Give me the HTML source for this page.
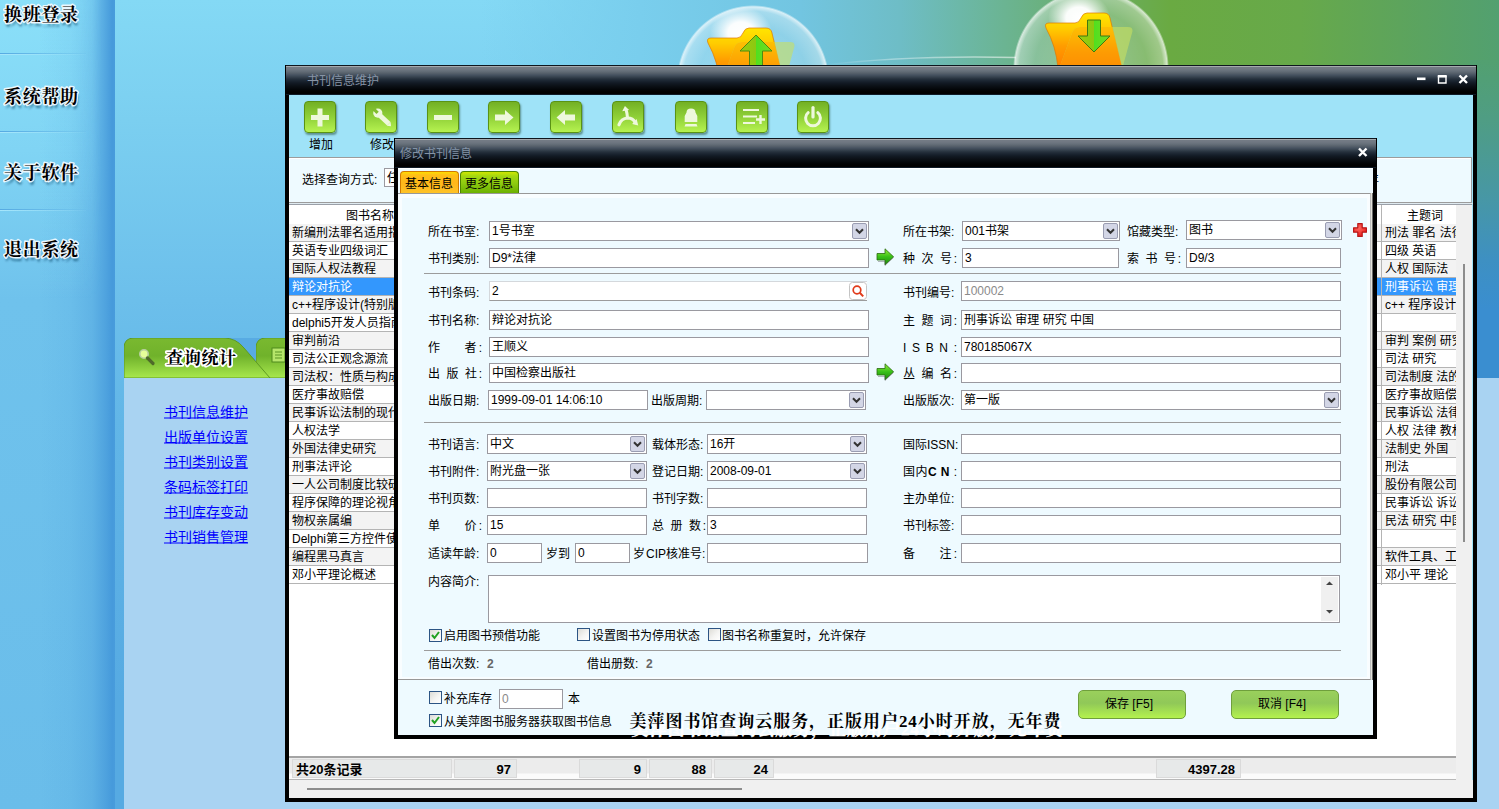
<!DOCTYPE html><html lang="zh-CN"><head><meta charset="utf-8"><title>书刊信息维护</title><style>
*{box-sizing:border-box;margin:0;padding:0}
html,body{width:1499px;height:809px;overflow:hidden}
body{position:relative;font-family:"Liberation Sans","Noto Sans CJK SC",sans-serif;font-size:12px;line-height:14px;color:#000;background:#6abdea}
.a{position:absolute}
.inp{position:absolute;background:#fff;border:1px solid #9a99a0;height:20px}
.cb{position:absolute;right:1px;top:1px;width:15px;height:16px;background:#d3d6e6;border:1px solid #9a9db2;border-radius:2px}
.cb svg{position:absolute;left:2px;top:4px}
.sep{position:absolute;height:1px;background:#9c9c9c}
.chk{position:absolute;width:13px;height:13px;background:linear-gradient(135deg,#dddcd6,#f4f4f2 55%,#fff);border:1px solid #2c5484}
.tb{position:absolute;top:101px;width:32px;height:32px;border-radius:4px;border:1px solid #5a9314;background:linear-gradient(#73b024,#8fd038 50%,#b6f250);box-shadow:1px 2px 2px rgba(40,80,60,.55)}
.tb svg{position:absolute;left:0;top:0}
.row{position:absolute;left:0;height:18px;border-bottom:1px solid #b4b4b4;white-space:nowrap;overflow:hidden;line-height:19px;padding-left:2px}
.btn{position:absolute;top:690px;width:108px;height:29px;border:1px solid #6f9f3c;border-radius:5px;background:linear-gradient(#9ad05c,#90c858 45%,#b4f24e);text-align:center;line-height:27px;font-size:12px}
.cell{position:absolute;top:1px;height:19px;background:#e7e9e9;border:1px solid #dadada;font-weight:bold;font-size:13px;line-height:18px;text-align:right;padding-right:4px;white-space:nowrap;overflow:hidden}
svg[role=img]{overflow:visible}
svg text{font-family:"Liberation Sans","Noto Sans CJK SC",sans-serif;white-space:pre}
.br text{font-family:"Liberation Serif","Noto Serif CJK SC",serif;font-size:18px;font-weight:bold;letter-spacing:.7px}
.br2 text{font-family:"Liberation Serif","Noto Serif CJK SC",serif;font-size:17px;font-weight:bold;letter-spacing:.7px}
.br3 text{font-family:"Liberation Serif","Noto Serif CJK SC",serif;font-size:17px;font-weight:bold}
</style></head><body>
<div class="a" style="left:0;top:0;width:1499px;height:809px;background:linear-gradient(180deg,#84d9f5 0px,#7bcff0 120px,#6cbfeb 300px,#62b6e7 420px,#56aae2 700px,#56aae2 809px)"></div>
<div class="a" style="left:480px;top:0;width:1019px;height:66px;background:linear-gradient(90deg,rgba(124,208,240,0) 0px,#79ceed 160px,#72c5e1 320px,#6ebdc6 420px,#6cb8a8 480px,#6ab07c 570px,#6aaa42 690px,#67a94a 820px,#5da45c 920px,#52a070 1019px)"></div>
<div class="a" style="left:1470px;top:60px;width:29px;height:318px;background:linear-gradient(180deg,#52a070 0,#4f9d84 60px,#4797a6 140px,#3e90c2 200px,#3a8ed0 250px,#3a8ed0 318px)"></div>
<div class="a" style="left:0;top:0;width:115px;height:809px;background:linear-gradient(180deg,#8be0f9 0,#80d4f4 150px,#6fc2ec 300px,#6abdea 809px)"></div>
<div class="a" style="left:40px;top:0;width:75px;height:809px;background:linear-gradient(90deg,rgba(74,158,220,0) 0,rgba(74,158,220,.12) 30px,rgba(74,158,220,.4) 52px,rgba(73,157,220,.85) 66px,rgba(70,154,219,1) 72px,rgba(72,156,220,1) 75px)"></div>
<div class="a" style="left:40px;top:0;width:75px;height:300px;background:linear-gradient(180deg,rgba(134,220,248,.3),rgba(134,220,248,0));-webkit-mask-image:linear-gradient(90deg,#000 0,#000 40px,transparent 62px);mask-image:linear-gradient(90deg,#000 0,#000 40px,transparent 62px)"></div>
<div class="a" style="left:226px;top:338px;width:64px;height:40px;background:#58abe3"></div>
<div class="a" style="left:0;top:53px;width:86px;height:1px;background:linear-gradient(90deg,#56aae2,rgba(90,174,226,.1))"></div>
<div class="a" style="left:0;top:54px;width:86px;height:1px;background:linear-gradient(90deg,#a6e6fb,rgba(166,230,251,.05))"></div>
<div class="a" style="left:0;top:131px;width:86px;height:1px;background:linear-gradient(90deg,#56aae2,rgba(90,174,226,.1))"></div>
<div class="a" style="left:0;top:132px;width:86px;height:1px;background:linear-gradient(90deg,#a6e6fb,rgba(166,230,251,.05))"></div>
<div class="a" style="left:0;top:209px;width:86px;height:1px;background:linear-gradient(90deg,#56aae2,rgba(90,174,226,.1))"></div>
<div class="a" style="left:0;top:210px;width:86px;height:1px;background:linear-gradient(90deg,#a6e6fb,rgba(166,230,251,.05))"></div>
<svg class="a" width="0" height="0"><defs><filter id="fsh" x="-10%" y="-30%" width="120%" height="180%"><feGaussianBlur stdDeviation="1.300"/></filter><filter id="fgl" x="-10%" y="-30%" width="120%" height="160%"><feGaussianBlur stdDeviation=".700"/></filter></defs></svg>
<svg class="a" style="left:0px;top:0px" width="100" height="32" viewBox="0 0 100 32" role="img" aria-label="换班登录"><g class="br"><text x="4" y="21" transform="translate(1,4)" fill="#0a3a5c" fill-opacity=".6" filter="url(#fsh)">换班登录</text><text x="4" y="21" fill="#fff" stroke="#fff" stroke-width="3" stroke-linejoin="round" stroke-opacity=".8" filter="url(#fgl)">换班登录</text><text x="4" y="21" fill="#fff" stroke="#eef8ff" stroke-width="1.400" stroke-linejoin="round">换班登录</text><text x="4" y="21" fill="#000">换班登录</text></g></svg>
<svg class="a" style="left:0px;top:82px" width="100" height="32" viewBox="0 0 100 32" role="img" aria-label="系统帮助"><g class="br"><text x="4" y="21" transform="translate(1,4)" fill="#0a3a5c" fill-opacity=".6" filter="url(#fsh)">系统帮助</text><text x="4" y="21" fill="#fff" stroke="#fff" stroke-width="3" stroke-linejoin="round" stroke-opacity=".8" filter="url(#fgl)">系统帮助</text><text x="4" y="21" fill="#fff" stroke="#eef8ff" stroke-width="1.400" stroke-linejoin="round">系统帮助</text><text x="4" y="21" fill="#000">系统帮助</text></g></svg>
<svg class="a" style="left:0px;top:158px" width="100" height="32" viewBox="0 0 100 32" role="img" aria-label="关于软件"><g class="br"><text x="4" y="21" transform="translate(1,4)" fill="#0a3a5c" fill-opacity=".6" filter="url(#fsh)">关于软件</text><text x="4" y="21" fill="#fff" stroke="#fff" stroke-width="3" stroke-linejoin="round" stroke-opacity=".8" filter="url(#fgl)">关于软件</text><text x="4" y="21" fill="#fff" stroke="#eef8ff" stroke-width="1.400" stroke-linejoin="round">关于软件</text><text x="4" y="21" fill="#000">关于软件</text></g></svg>
<svg class="a" style="left:0px;top:235px" width="100" height="32" viewBox="0 0 100 32" role="img" aria-label="退出系统"><g class="br"><text x="4" y="21" transform="translate(1,4)" fill="#0a3a5c" fill-opacity=".6" filter="url(#fsh)">退出系统</text><text x="4" y="21" fill="#fff" stroke="#fff" stroke-width="3" stroke-linejoin="round" stroke-opacity=".8" filter="url(#fgl)">退出系统</text><text x="4" y="21" fill="#fff" stroke="#eef8ff" stroke-width="1.400" stroke-linejoin="round">退出系统</text><text x="4" y="21" fill="#000">退出系统</text></g></svg>
<div class="a" style="left:124px;top:378px;width:1375px;height:431px;background:#a9d3f2"></div>
<svg class="a" style="left:256px;top:338px" width="150" height="40" viewBox="0 0 150 40"><defs><linearGradient id="tg256" x1="0" y1="0" x2="0" y2="1"><stop offset="0" stop-color="#7ab930"/><stop offset=".45" stop-color="#70b22b"/><stop offset="1" stop-color="#a8e84e"/></linearGradient></defs><path d="M0 40V10Q0 0 10 0H100Q112 0 120 10L146 40Z" fill="url(#tg256)" stroke="#5e9a22" stroke-width="1"/><rect x="16" y="10" width="13" height="14" fill="#b6e66a" stroke="#4f8a1c"/><path d="M19 14h7M19 17h7M19 20h7" stroke="#5a9424" stroke-width="1"/></svg>
<svg class="a" style="left:124px;top:338px" width="150" height="40" viewBox="0 0 150 40"><defs><linearGradient id="tg124" x1="0" y1="0" x2="0" y2="1"><stop offset="0" stop-color="#7ab930"/><stop offset=".45" stop-color="#70b22b"/><stop offset="1" stop-color="#a8e84e"/></linearGradient></defs><path d="M0 40V10Q0 0 10 0H100Q112 0 120 10L146 40Z" fill="url(#tg124)" stroke="#5e9a22" stroke-width="1"/><circle cx="20" cy="16" r="4.200" fill="#e6ff9a" stroke="#b8cfa0" stroke-width="1.600"/><path d="M23.500 20L29 25.500" stroke="#4f6a2a" stroke-width="3.200" stroke-linecap="round"/></svg>
<svg class="a" style="left:160px;top:344px" width="84" height="28" viewBox="0 0 84 28" role="img" aria-label="查询统计"><g class="br2"><text x="6" y="20" fill="#fff" stroke="#fff" stroke-width="3.600" stroke-linejoin="round" filter="url(#fgl)">查询统计</text><text x="6" y="20" fill="#fff" stroke="#fff" stroke-width="2" stroke-linejoin="round">查询统计</text><text x="6" y="20" fill="#000">查询统计</text></g></svg>
<svg class="a" style="left:164px;top:402.5px;" width="86" height="18" role="img" aria-label="书刊信息维护"><text x="0" y="13.5" font-size="14" fill="#0000ff">书刊信息维护</text><path d="M0 15H84" stroke="#0000ff" stroke-width="1" fill="none"/></svg>
<svg class="a" style="left:164px;top:428px;" width="86" height="18" role="img" aria-label="出版单位设置"><text x="0" y="13.5" font-size="14" fill="#0000ff">出版单位设置</text><path d="M0 15H84" stroke="#0000ff" stroke-width="1" fill="none"/></svg>
<svg class="a" style="left:164px;top:453px;" width="86" height="18" role="img" aria-label="书刊类别设置"><text x="0" y="13.5" font-size="14" fill="#0000ff">书刊类别设置</text><path d="M0 15H84" stroke="#0000ff" stroke-width="1" fill="none"/></svg>
<svg class="a" style="left:164px;top:478px;" width="86" height="18" role="img" aria-label="条码标签打印"><text x="0" y="13.5" font-size="14" fill="#0000ff">条码标签打印</text><path d="M0 15H84" stroke="#0000ff" stroke-width="1" fill="none"/></svg>
<svg class="a" style="left:164px;top:503px;" width="86" height="18" role="img" aria-label="书刊库存变动"><text x="0" y="13.5" font-size="14" fill="#0000ff">书刊库存变动</text><path d="M0 15H84" stroke="#0000ff" stroke-width="1" fill="none"/></svg>
<svg class="a" style="left:164px;top:528px;" width="86" height="18" role="img" aria-label="书刊销售管理"><text x="0" y="13.5" font-size="14" fill="#0000ff">书刊销售管理</text><path d="M0 15H84" stroke="#0000ff" stroke-width="1" fill="none"/></svg>
<svg class="a" style="left:672px;top:0" width="162" height="66" viewBox="672 0 162 66"><defs><radialGradient id="og753" cx="50%" cy="50%" r="50%"><stop offset="0" stop-color="#fff" stop-opacity=".3"/><stop offset=".72" stop-color="#fff" stop-opacity=".2"/><stop offset=".92" stop-color="#fff" stop-opacity=".36"/><stop offset=".975" stop-color="#fff" stop-opacity=".72"/><stop offset="1" stop-color="#fff" stop-opacity="0"/></radialGradient><radialGradient id="oh753" cx="50%" cy="50%" r="50%"><stop offset="0" stop-color="#fff" stop-opacity="1"/><stop offset=".42" stop-color="#fff" stop-opacity=".96"/><stop offset="1" stop-color="#fff" stop-opacity="0"/></radialGradient><linearGradient id="of753" x1="0" y1="0" x2="0" y2="1"><stop offset="0" stop-color="#ffe600"/><stop offset=".28" stop-color="#ffcc00"/><stop offset=".6" stop-color="#ff9c00"/><stop offset="1" stop-color="#ff7e00"/></linearGradient><linearGradient id="ofl753" x1="0" y1="0" x2="0" y2="1"><stop offset="0" stop-color="#ffbe00"/><stop offset=".5" stop-color="#ff9a00"/><stop offset="1" stop-color="#ff8400"/></linearGradient><linearGradient id="oa753" x1="0" y1="0" x2="1" y2="0"><stop offset="0" stop-color="#9ccc10"/><stop offset=".5" stop-color="#8cc810"/><stop offset=".5" stop-color="#4fe020"/><stop offset="1" stop-color="#7ad820"/></linearGradient><clipPath id="ocp753"><path d="M708 43 q-2 -5 3 -5 h26 q4 0 6 -5 q2 -5 6 -5 h17 q5 0 6 5 l12 50 h-64 q-2 -22 -12 -40z"/></clipPath></defs><circle cx="753" cy="81.5" r="76.5" fill="url(#og753)"/><ellipse cx="741" cy="33" rx="31" ry="26" fill="url(#oh753)"/><path d="M708 43 q-2 -5 3 -5 h26 q4 0 6 -5 q2 -5 6 -5 h17 q5 0 6 5 l12 50 h-64 q-2 -22 -12 -40z" fill="url(#of753)" stroke="#e07800" stroke-width=".7"/><path d="M734 48 q2 -6 8 -6 h48 q6 0 4 6 l-12 44 h-64z" fill="#c8e060" fill-opacity=".6"/><path d="M734 48 q2 -6 8 -6 h48 q6 0 4 6 l-12 44 h-64z" fill="url(#ofl753)" fill-opacity=".95" clip-path="url(#ocp753)"/><path d="M756 35 l16 16 h-9.500 v20 h-13 v-20 h-9.500z" fill="url(#oa753)" stroke="#4f8a10" stroke-width="1"/></svg>
<svg class="a" style="left:1008px;top:0" width="166" height="66" viewBox="1008 0 166 66"><defs><radialGradient id="og1091" cx="50%" cy="50%" r="50%"><stop offset="0" stop-color="#fff" stop-opacity=".3"/><stop offset=".72" stop-color="#fff" stop-opacity=".2"/><stop offset=".92" stop-color="#fff" stop-opacity=".36"/><stop offset=".975" stop-color="#fff" stop-opacity=".72"/><stop offset="1" stop-color="#fff" stop-opacity="0"/></radialGradient><radialGradient id="oh1091" cx="50%" cy="50%" r="50%"><stop offset="0" stop-color="#fff" stop-opacity="1"/><stop offset=".42" stop-color="#fff" stop-opacity=".96"/><stop offset="1" stop-color="#fff" stop-opacity="0"/></radialGradient><linearGradient id="of1091" x1="0" y1="0" x2="0" y2="1"><stop offset="0" stop-color="#ffe600"/><stop offset=".28" stop-color="#ffcc00"/><stop offset=".6" stop-color="#ff9c00"/><stop offset="1" stop-color="#ff7e00"/></linearGradient><linearGradient id="ofl1091" x1="0" y1="0" x2="0" y2="1"><stop offset="0" stop-color="#ffbe00"/><stop offset=".5" stop-color="#ff9a00"/><stop offset="1" stop-color="#ff8400"/></linearGradient><linearGradient id="oa1091" x1="0" y1="0" x2="1" y2="0"><stop offset="0" stop-color="#9ccc10"/><stop offset=".5" stop-color="#8cc810"/><stop offset=".5" stop-color="#4fe020"/><stop offset="1" stop-color="#7ad820"/></linearGradient><clipPath id="ocp1091"><path d="M1046 28 q-2 -5 3 -5 h26 q4 0 6 -5 q2 -5 6 -5 h17 q5 0 6 5 l12 50 h-64 q-2 -22 -12 -40z"/></clipPath></defs><circle cx="1091" cy="67.5" r="78" fill="url(#og1091)"/><ellipse cx="1079" cy="18" rx="31" ry="26" fill="url(#oh1091)"/><path d="M1046 28 q-2 -5 3 -5 h26 q4 0 6 -5 q2 -5 6 -5 h17 q5 0 6 5 l12 50 h-64 q-2 -22 -12 -40z" fill="url(#of1091)" stroke="#e07800" stroke-width=".7"/><path d="M1072 33 q2 -6 8 -6 h48 q6 0 4 6 l-12 44 h-64z" fill="#c8e060" fill-opacity=".6"/><path d="M1072 33 q2 -6 8 -6 h48 q6 0 4 6 l-12 44 h-64z" fill="url(#ofl1091)" fill-opacity=".95" clip-path="url(#ocp1091)"/><path d="M1087.5 20 h13 v16 h9.500 l-16 16 l-16 -16 h9.500z" fill="url(#oa1091)" stroke="#3f7a10" stroke-width="1"/></svg>
<svg class="a" style="left:820px;top:50px" width="200" height="16" viewBox="0 0 200 16"><defs><linearGradient id="sw" x1="0" y1="0" x2="1" y2="0"><stop offset="0" stop-color="#fff" stop-opacity="0"/><stop offset=".35" stop-color="#fff" stop-opacity=".35"/><stop offset="1" stop-color="#fff" stop-opacity=".55"/></linearGradient></defs><path d="M4 15Q90 5 196 7.500" fill="none" stroke="url(#sw)" stroke-width="1.300"/></svg>
<div class="a" style="left:285px;top:65px;width:1192px;height:737px;background:#000"></div>
<div class="a" style="left:286px;top:65px;width:1190px;height:30px;background:linear-gradient(180deg,#0e161e 0px,#0e161e 1px,#a6aaae 1px,#a6aaae 2px,#747c85 2px,#707882 4px,#66707a 6px,#58626c 8px,#465260 10px,#36424e 12px,#25303c 14px,#1a2430 16px,#121a24 18px,#0b1016 21px,#020406 25px,#000 27px,#000 29px,#0e1a26 29px,#0e1a26 30px)"></div>
<svg class="a" style="left:307px;top:73px;" width="74" height="14" role="img" aria-label="书刊信息维护"><text x="0" y="11.5" font-size="12" fill="#8794a6">书刊信息维护</text></svg>
<svg class="a" style="left:1414px;top:72px" width="58" height="14" viewBox="0 0 58 14"><rect x="3" y="5.500" width="8.500" height="2.600" fill="#fff"/><path d="M24.500 4.500h7.500v6.500h-7.500z" fill="none" stroke="#fff" stroke-width="1.400"/><rect x="23.800" y="3" width="8.900" height="2.400" fill="#fff"/><path d="M45.500 3.500l7.500 7.500M53 3.500l-7.500 7.500" stroke="#fff" stroke-width="2.400"/></svg>
<div class="a" style="left:289px;top:95px;width:1184px;height:703px;background:#9fe3f8"></div>
<div class="tb" style="left:304px"><svg width="30" height="30" viewBox="1 1.500 30 30"><path d="M13.500 8h5v6.500H25v5h-6.500V26h-5v-6.500H7v-5h6.500z" fill="#eef8dc"/></svg></div>
<div class="tb" style="left:365px"><svg width="30" height="30" viewBox="1 1.500 30 30"><path d="M14.200 14.200L23.800 23.200" stroke="#eef8dc" stroke-width="5" stroke-linecap="butt"/><path d="M21.800 25.300l4.200 .400l-.400 -4.200z" fill="#eef8dc"/><circle cx="12.800" cy="12.600" r="4.600" fill="#eef8dc"/><path d="M12.600 12.400L8 7.800" stroke="#80bd2e" stroke-width="3.200"/></svg></div>
<div class="tb" style="left:427px"><svg width="30" height="30" viewBox="1 1.500 30 30"><rect x="7" y="14.500" width="18" height="5" fill="#eef8dc"/></svg></div>
<div class="tb" style="left:488px"><svg width="30" height="30" viewBox="1 1.500 30 30"><path d="M7 14h10V9.500l8.500 7.500L17 24.500V20H7z" fill="#eef8dc"/></svg></div>
<div class="tb" style="left:550px"><svg width="30" height="30" viewBox="1 1.500 30 30"><path d="M25 14H15V9.500L6.500 17L15 24.500V20h10z" fill="#eef8dc"/></svg></div>
<div class="tb" style="left:612px"><svg width="30" height="30" viewBox="1 1.500 30 30"><g transform="translate(1.600,.400) scale(.900)"><path d="M15.500 19.500Q15 13 13.800 9.500" stroke="#eef8dc" stroke-width="3.400" fill="none"/><path d="M9.600 11.600l3 -6l4.600 4.400z" fill="#eef8dc"/><path d="M6 26.500Q8.500 19.500 15.500 19Q21.500 19 24 24" stroke="#eef8dc" stroke-width="3.600" fill="none" stroke-linecap="round"/><path d="M20.600 25.600l6.800 1.600l-1.800 -7.200z" fill="#eef8dc"/></g></svg></div>
<div class="tb" style="left:675px"><svg width="30" height="30" viewBox="1 1.500 30 30"><path d="M11.500 12q0-4 4.500-4t4.500 4l1.800 3.500v6h-12.600v-6zM10.500 23.500h11l1 2.500h-13z" fill="#eef8dc"/></svg></div>
<div class="tb" style="left:736px"><svg width="30" height="30" viewBox="1 1.500 30 30"><path d="M7 9.500h16M7 16h14M7 22.500h12" stroke="#eef8dc" stroke-width="2.200"/><path d="M24.500 14.500v9M20 19h9" stroke="#eef8dc" stroke-width="2.400"/></svg></div>
<div class="tb" style="left:797px"><svg width="30" height="30" viewBox="1 1.500 30 30"><path d="M11.200 12.200a7.400 7.400 0 1 0 9.600 0" fill="none" stroke="#eef8dc" stroke-width="3" stroke-linecap="round"/><path d="M16 7v9.500" stroke="#eef8dc" stroke-width="3.200" stroke-linecap="round"/></svg></div>
<svg class="a" style="left:309px;top:137px;" width="26" height="14" role="img" aria-label="增加"><text x="0" y="11.5" font-size="12">增加</text></svg>
<svg class="a" style="left:370px;top:137px;" width="26" height="14" role="img" aria-label="修改"><text x="0" y="11.5" font-size="12">修改</text></svg>
<div class="a" style="left:289px;top:157px;width:1183px;height:46px;background:#eefaff;border:1px solid #9c9c9c;border-left:none;box-shadow:inset 1px 1px 0 #fff"></div>
<div class="a" style="left:289px;top:203px;width:1184px;height:1px;background:#dfeaf0"></div>
<svg class="a" style="left:302px;top:172px;" width="80" height="14" role="img" aria-label="选择查询方式:"><text x="0" y="11.5" font-size="12">选择查询方式:</text></svg>
<div class="inp" style="left:384px;top:168px;width:120px;height:19px"><svg class="a" style="left:2px;top:1px;" width="14" height="14" role="img" aria-label="任"><text x="0" y="11.5" font-size="12">任</text></svg></div>
<svg class="a" style="left:1367px;top:172px;" width="14" height="14" role="img" aria-label="年"><text x="0" y="11.5" font-size="12">年</text></svg>
<div class="a" style="left:289px;top:204px;width:1183px;height:553px;background:#fff;border-top:1px solid #9aa0a8;border-right:1px solid #a0a0a0"></div>
<svg class="a" style="left:346px;top:208px;" width="50" height="14" role="img" aria-label="图书名称"><text x="0" y="11.5" font-size="12">图书名称</text></svg>
<svg class="a" style="left:1407px;top:208px;" width="38" height="14" role="img" aria-label="主题词"><text x="0" y="11.5" font-size="12">主题词</text></svg>
<div class="a" style="left:289px;top:224px;width:110px;height:361px;overflow:hidden">
<div class="row" style="top:0px;width:110px;background:#f3f3f3;"><svg class="a" style="left:2.5px;top:0.7px;" width="122" height="14" role="img" aria-label="新编刑法罪名适用指南"><text x="0" y="11.5" font-size="12">新编刑法罪名适用指南</text></svg></div>
<div class="row" style="top:18px;width:110px;background:#fff;"><svg class="a" style="left:2.5px;top:0.7px;" width="98" height="14" role="img" aria-label="英语专业四级词汇"><text x="0" y="11.5" font-size="12">英语专业四级词汇</text></svg></div>
<div class="row" style="top:36px;width:110px;background:#f3f3f3;"><svg class="a" style="left:2.5px;top:0.7px;" width="86" height="14" role="img" aria-label="国际人权法教程"><text x="0" y="11.5" font-size="12">国际人权法教程</text></svg></div>
<div class="row" style="top:54px;width:110px;background:#3397fd;"><svg class="a" style="left:2.5px;top:0.7px;" width="62" height="14" role="img" aria-label="辩论对抗论"><text x="0" y="11.5" font-size="12" fill="#fff">辩论对抗论</text></svg></div>
<div class="row" style="top:72px;width:110px;background:#f3f3f3;"><svg class="a" style="left:2.5px;top:0.7px;" width="116" height="14" role="img" aria-label="c++程序设计(特别版)"><text x="0" y="11.5" font-size="12">c++程序设计(特别版)</text></svg></div>
<div class="row" style="top:90px;width:110px;background:#fff;"><svg class="a" style="left:2.5px;top:0.7px;" width="116" height="14" role="img" aria-label="delphi5开发人员指南"><text x="0" y="11.5" font-size="12">delphi5开发人员指南</text></svg></div>
<div class="row" style="top:108px;width:110px;background:#f3f3f3;"><svg class="a" style="left:2.5px;top:0.7px;" width="50" height="14" role="img" aria-label="审判前沿"><text x="0" y="11.5" font-size="12">审判前沿</text></svg></div>
<div class="row" style="top:126px;width:110px;background:#fff;"><svg class="a" style="left:2.5px;top:0.7px;" width="98" height="14" role="img" aria-label="司法公正观念源流"><text x="0" y="11.5" font-size="12">司法公正观念源流</text></svg></div>
<div class="row" style="top:144px;width:110px;background:#f3f3f3;"><svg class="a" style="left:2.5px;top:0.7px;" width="110" height="14" role="img" aria-label="司法权：性质与构成"><text x="0" y="11.5" font-size="12">司法权：性质与构成</text></svg></div>
<div class="row" style="top:162px;width:110px;background:#fff;"><svg class="a" style="left:2.5px;top:0.7px;" width="74" height="14" role="img" aria-label="医疗事故赔偿"><text x="0" y="11.5" font-size="12">医疗事故赔偿</text></svg></div>
<div class="row" style="top:180px;width:110px;background:#f3f3f3;"><svg class="a" style="left:2.5px;top:0.7px;" width="122" height="14" role="img" aria-label="民事诉讼法制的现代化"><text x="0" y="11.5" font-size="12">民事诉讼法制的现代化</text></svg></div>
<div class="row" style="top:198px;width:110px;background:#fff;"><svg class="a" style="left:2.5px;top:0.7px;" width="50" height="14" role="img" aria-label="人权法学"><text x="0" y="11.5" font-size="12">人权法学</text></svg></div>
<div class="row" style="top:216px;width:110px;background:#f3f3f3;"><svg class="a" style="left:2.5px;top:0.7px;" width="86" height="14" role="img" aria-label="外国法律史研究"><text x="0" y="11.5" font-size="12">外国法律史研究</text></svg></div>
<div class="row" style="top:234px;width:110px;background:#fff;"><svg class="a" style="left:2.5px;top:0.7px;" width="62" height="14" role="img" aria-label="刑事法评论"><text x="0" y="11.5" font-size="12">刑事法评论</text></svg></div>
<div class="row" style="top:252px;width:110px;background:#f3f3f3;"><svg class="a" style="left:2.5px;top:0.7px;" width="122" height="14" role="img" aria-label="一人公司制度比较研究"><text x="0" y="11.5" font-size="12">一人公司制度比较研究</text></svg></div>
<div class="row" style="top:270px;width:110px;background:#fff;"><svg class="a" style="left:2.5px;top:0.7px;" width="110" height="14" role="img" aria-label="程序保障的理论视角"><text x="0" y="11.5" font-size="12">程序保障的理论视角</text></svg></div>
<div class="row" style="top:288px;width:110px;background:#f3f3f3;"><svg class="a" style="left:2.5px;top:0.7px;" width="62" height="14" role="img" aria-label="物权亲属编"><text x="0" y="11.5" font-size="12">物权亲属编</text></svg></div>
<div class="row" style="top:306px;width:110px;background:#fff;"><svg class="a" style="left:2.5px;top:0.7px;" width="122" height="14" role="img" aria-label="Delphi第三方控件使用"><text x="0" y="11.5" font-size="12">Delphi第三方控件使用</text></svg></div>
<div class="row" style="top:324px;width:110px;background:#f3f3f3;"><svg class="a" style="left:2.5px;top:0.7px;" width="74" height="14" role="img" aria-label="编程黑马真言"><text x="0" y="11.5" font-size="12">编程黑马真言</text></svg></div>
<div class="row" style="top:342px;width:110px;background:#fff;"><svg class="a" style="left:2.5px;top:0.7px;" width="86" height="14" role="img" aria-label="邓小平理论概述"><text x="0" y="11.5" font-size="12">邓小平理论概述</text></svg></div>
</div>
<div class="a" style="left:1377px;top:224px;width:79px;height:361px;overflow:hidden">
<div class="row" style="top:0px;width:79px;background:#f3f3f3;"><svg class="a" style="left:7.5px;top:0.7px;" width="86" height="14" role="img" aria-label="刑法 罪名 法律"><text x="0" y="11.5" font-size="12">刑法 罪名 法律</text></svg></div>
<div class="row" style="top:18px;width:79px;background:#fff;"><svg class="a" style="left:7.5px;top:0.7px;" width="56" height="14" role="img" aria-label="四级 英语"><text x="0" y="11.5" font-size="12">四级 英语</text></svg></div>
<div class="row" style="top:36px;width:79px;background:#f3f3f3;"><svg class="a" style="left:7.5px;top:0.7px;" width="68" height="14" role="img" aria-label="人权 国际法"><text x="0" y="11.5" font-size="12">人权 国际法</text></svg></div>
<div class="row" style="top:54px;width:79px;background:#3397fd;"><svg class="a" style="left:7.5px;top:0.7px;" width="80" height="14" role="img" aria-label="刑事诉讼 审理"><text x="0" y="11.5" font-size="12" fill="#fff">刑事诉讼 审理</text></svg></div>
<div class="row" style="top:72px;width:79px;background:#f3f3f3;"><svg class="a" style="left:7.5px;top:0.7px;" width="74" height="14" role="img" aria-label="c++ 程序设计"><text x="0" y="11.5" font-size="12">c++ 程序设计</text></svg></div>
<div class="row" style="top:90px;width:79px;background:#fff;"></div>
<div class="row" style="top:108px;width:79px;background:#f3f3f3;"><svg class="a" style="left:7.5px;top:0.7px;" width="86" height="14" role="img" aria-label="审判 案例 研究"><text x="0" y="11.5" font-size="12">审判 案例 研究</text></svg></div>
<div class="row" style="top:126px;width:79px;background:#fff;"><svg class="a" style="left:7.5px;top:0.7px;" width="56" height="14" role="img" aria-label="司法 研究"><text x="0" y="11.5" font-size="12">司法 研究</text></svg></div>
<div class="row" style="top:144px;width:79px;background:#f3f3f3;"><svg class="a" style="left:7.5px;top:0.7px;" width="80" height="14" role="img" aria-label="司法制度 法的"><text x="0" y="11.5" font-size="12">司法制度 法的</text></svg></div>
<div class="row" style="top:162px;width:79px;background:#fff;"><svg class="a" style="left:7.5px;top:0.7px;" width="74" height="14" role="img" aria-label="医疗事故赔偿"><text x="0" y="11.5" font-size="12">医疗事故赔偿</text></svg></div>
<div class="row" style="top:180px;width:79px;background:#f3f3f3;"><svg class="a" style="left:7.5px;top:0.7px;" width="80" height="14" role="img" aria-label="民事诉讼 法律"><text x="0" y="11.5" font-size="12">民事诉讼 法律</text></svg></div>
<div class="row" style="top:198px;width:79px;background:#fff;"><svg class="a" style="left:7.5px;top:0.7px;" width="86" height="14" role="img" aria-label="人权 法律 教材"><text x="0" y="11.5" font-size="12">人权 法律 教材</text></svg></div>
<div class="row" style="top:216px;width:79px;background:#f3f3f3;"><svg class="a" style="left:7.5px;top:0.7px;" width="68" height="14" role="img" aria-label="法制史 外国"><text x="0" y="11.5" font-size="12">法制史 外国</text></svg></div>
<div class="row" style="top:234px;width:79px;background:#fff;"><svg class="a" style="left:7.5px;top:0.7px;" width="26" height="14" role="img" aria-label="刑法"><text x="0" y="11.5" font-size="12">刑法</text></svg></div>
<div class="row" style="top:252px;width:79px;background:#f3f3f3;"><svg class="a" style="left:7.5px;top:0.7px;" width="74" height="14" role="img" aria-label="股份有限公司"><text x="0" y="11.5" font-size="12">股份有限公司</text></svg></div>
<div class="row" style="top:270px;width:79px;background:#fff;"><svg class="a" style="left:7.5px;top:0.7px;" width="80" height="14" role="img" aria-label="民事诉讼 诉讼"><text x="0" y="11.5" font-size="12">民事诉讼 诉讼</text></svg></div>
<div class="row" style="top:288px;width:79px;background:#f3f3f3;"><svg class="a" style="left:7.5px;top:0.7px;" width="86" height="14" role="img" aria-label="民法 研究 中国"><text x="0" y="11.5" font-size="12">民法 研究 中国</text></svg></div>
<div class="row" style="top:306px;width:79px;background:#fff;"></div>
<div class="row" style="top:324px;width:79px;background:#f3f3f3;"><svg class="a" style="left:7.5px;top:0.7px;" width="74" height="14" role="img" aria-label="软件工具、工"><text x="0" y="11.5" font-size="12">软件工具、工</text></svg></div>
<div class="row" style="top:342px;width:79px;background:#fff;"><svg class="a" style="left:7.5px;top:0.7px;" width="68" height="14" role="img" aria-label="邓小平 理论"><text x="0" y="11.5" font-size="12">邓小平 理论</text></svg></div>
</div>
<div class="a" style="left:1381px;top:205px;width:1px;height:380px;background:#b4b4b4"></div>
<div class="a" style="left:1456px;top:205px;width:16px;height:575px;background:#f0f0f0"></div>
<div class="a" style="left:1463px;top:264px;width:2px;height:278px;background:#8c8c8c"></div>
<div class="a" style="left:289px;top:756px;width:1167px;height:24px;background:linear-gradient(#ececec 0,#ececec 15px,#fbfbfb 16px,#fbfbfb 100%);border-top:2px solid #a4a4a4;border-bottom:1px solid #b8b8b8">
<div class="cell" style="left:3px;width:160px"><svg class="a" style="left:3px;top:1px;" width="67" height="16" role="img" aria-label="共20条记录"><text x="0" y="12.5" font-size="13" font-weight="bold">共20条记录</text></svg></div>
<div class="cell" style="left:165px;width:63px"><svg class="a" style="left:0px;top:1px;" width="56" height="16" role="img" aria-label="97"><text x="56" y="12.5" font-size="13" font-weight="bold" text-anchor="end">97</text></svg></div>
<div class="cell" style="left:290px;width:68px"><svg class="a" style="left:0px;top:1px;" width="61" height="16" role="img" aria-label="9"><text x="61" y="12.5" font-size="13" font-weight="bold" text-anchor="end">9</text></svg></div>
<div class="cell" style="left:360px;width:63px"><svg class="a" style="left:0px;top:1px;" width="56" height="16" role="img" aria-label="88"><text x="56" y="12.5" font-size="13" font-weight="bold" text-anchor="end">88</text></svg></div>
<div class="cell" style="left:425px;width:60px"><svg class="a" style="left:0px;top:1px;" width="53" height="16" role="img" aria-label="24"><text x="53" y="12.5" font-size="13" font-weight="bold" text-anchor="end">24</text></svg></div>
<div class="cell" style="left:867px;width:85px"><svg class="a" style="left:0px;top:1px;" width="78" height="16" role="img" aria-label="4397.28"><text x="78" y="12.5" font-size="13" font-weight="bold" text-anchor="end">4397.28</text></svg></div>
</div>
<div class="a" style="left:289px;top:780px;width:1184px;height:18px;background:#f0f0f0"></div>
<div class="a" style="left:307px;top:788px;width:435px;height:2px;background:#8c8c8c"></div>
<div class="a" style="left:394px;top:138px;width:983px;height:601px;background:#000"></div>
<div class="a" style="left:395px;top:138px;width:981px;height:30px;background:linear-gradient(180deg,#0e161e 0px,#0e161e 1px,#a6aaae 1px,#a6aaae 2px,#747c85 2px,#707882 4px,#66707a 6px,#58626c 8px,#465260 10px,#36424e 12px,#25303c 14px,#1a2430 16px,#121a24 18px,#0b1016 21px,#020406 25px,#000 27px,#000 29px,#0e1a26 29px,#0e1a26 30px)"></div>
<svg class="a" style="left:400px;top:146px;" width="74" height="14" role="img" aria-label="修改书刊信息"><text x="0" y="11.5" font-size="12" fill="#8393a6">修改书刊信息</text></svg>
<svg class="a" style="left:1356px;top:146px" width="14" height="14" viewBox="0 0 14 14"><path d="M3 2.500l7.500 7.500M10.500 2.500l-7.500 7.500" stroke="#fff" stroke-width="2.400"/></svg>
<div class="a" style="left:398px;top:168px;width:975px;height:567px;background:#eefaff;border-top:1px solid #fff"></div>
<div class="a" style="left:400px;top:171px;width:59px;height:23px;border:1px solid #cf7a00;border-bottom:none;border-radius:4px 4px 0 0;background:linear-gradient(#ffde00 0,#ffbf18 3px,#ffb71a 50%,#ffc428)"><svg class="a" style="left:4px;top:4px;" width="50" height="14" role="img" aria-label="基本信息"><text x="0" y="11.5" font-size="12">基本信息</text></svg></div>
<div class="a" style="left:460px;top:171px;width:59px;height:23px;border:1px solid #4d8400;border-bottom:none;border-radius:4px 4px 0 0;background:linear-gradient(#cfe600 0,#a4d810 4px,#8fcc10 50%,#68ae00)"><svg class="a" style="left:4px;top:4px;" width="50" height="14" role="img" aria-label="更多信息"><text x="0" y="11.5" font-size="12">更多信息</text></svg></div>
<div class="a" style="left:398px;top:193px;width:973px;height:487px;background:#f9fdff;border:1px solid #989898;border-left:none;border-right-color:#bcbcbc"></div>
<div class="a" style="left:1371px;top:193px;width:2px;height:487px;background:linear-gradient(90deg,#e2e2da 0,#e2e2da 50%,#6a6a6a 50%)"></div>
<div class="a" style="left:402px;top:198px;width:965px;height:479px;background:#eefaff"></div>
<svg class="a" style="left:428px;top:224px;" width="56" height="14" role="img" aria-label="所在书室:"><text x="0" y="11.5" font-size="12">所在书室:</text></svg>
<div class="inp" style="left:489px;top:221px;width:380px;height:20px;"><svg class="a" style="left:2px;top:1px;" width="44" height="14" role="img" aria-label="1号书室"><text x="0" y="11.5" font-size="12">1号书室</text></svg><div class="cb"><svg width="9" height="7" viewBox="0 0 9 7"><path d="M1 1.200l3.500 3.600l3.500 -3.600" fill="none" stroke="#333" stroke-width="2"/></svg></div></div>
<svg class="a" style="left:903px;top:224px;" width="56" height="14" role="img" aria-label="所在书架:"><text x="0" y="11.5" font-size="12">所在书架:</text></svg>
<div class="inp" style="left:962px;top:221px;width:158px;height:20px;"><svg class="a" style="left:2px;top:1px;" width="44" height="14" role="img" aria-label="001书架"><text x="0" y="11.5" font-size="12">001书架</text></svg><div class="cb"><svg width="9" height="7" viewBox="0 0 9 7"><path d="M1 1.200l3.500 3.600l3.500 -3.600" fill="none" stroke="#333" stroke-width="2"/></svg></div></div>
<svg class="a" style="left:1127px;top:224px;" width="56" height="14" role="img" aria-label="馆藏类型:"><text x="0" y="11.5" font-size="12">馆藏类型:</text></svg>
<div class="inp" style="left:1186px;top:220px;width:156px;height:20px;"><svg class="a" style="left:2px;top:1px;" width="26" height="14" role="img" aria-label="图书"><text x="0" y="11.5" font-size="12">图书</text></svg><div class="cb"><svg width="9" height="7" viewBox="0 0 9 7"><path d="M1 1.200l3.500 3.600l3.500 -3.600" fill="none" stroke="#333" stroke-width="2"/></svg></div></div>
<svg class="a" style="left:1352px;top:222px" width="16" height="16" viewBox="0 0 16 16"><defs><radialGradient id="rp" cx="40%" cy="35%" r="70%"><stop offset="0" stop-color="#ff6a60"/><stop offset="1" stop-color="#e81818"/></radialGradient></defs><path d="M5.800 1.600h4.400v4.200h4.200v4.400h-4.200v4.200H5.800v-4.200H1.600V5.800h4.200z" fill="url(#rp)" stroke="#b81818" stroke-width="1.200" stroke-linejoin="round"/></svg>
<svg class="a" style="left:428px;top:251px;" width="56" height="14" role="img" aria-label="书刊类别:"><text x="0" y="11.5" font-size="12">书刊类别:</text></svg>
<div class="inp" style="left:489px;top:248px;width:380px;height:20px;"><svg class="a" style="left:2px;top:1px;" width="44" height="14" role="img" aria-label="D9*法律"><text x="0" y="11.5" font-size="12">D9*法律</text></svg></div>
<svg class="a" style="left:876px;top:248px" width="19" height="18" viewBox="0 0 19 18"><defs><linearGradient id="ga876_248" x1="0" y1="0" x2="0" y2="1"><stop offset="0" stop-color="#9aee3a"/><stop offset=".5" stop-color="#38c018"/><stop offset="1" stop-color="#1e8a0c"/></linearGradient></defs><path d="M1 5.500h8V.800l8.600 8l-8.600 8V12H1z" fill="url(#ga876_248)" stroke="#2a6a10" stroke-width=".8"/><path d="M2 13.500h7v4l8.500 -8" fill="none" stroke="#555" stroke-opacity=".4" stroke-width="1"/></svg>
<svg class="a" style="left:903px;top:251px;" width="56" height="14" role="img" aria-label="种 次 号:"><text x="0" y="11.5" font-size="12" textLength="54" lengthAdjust="spacing">种 次 号:</text></svg>
<div class="inp" style="left:962px;top:248px;width:157px;height:20px;"><svg class="a" style="left:2px;top:1px;" width="8" height="14" role="img" aria-label="3"><text x="0" y="11.5" font-size="12">3</text></svg></div>
<svg class="a" style="left:1127px;top:251px;" width="56" height="14" role="img" aria-label="索 书 号:"><text x="0" y="11.5" font-size="12" textLength="54" lengthAdjust="spacing">索 书 号:</text></svg>
<div class="inp" style="left:1186px;top:248px;width:155px;height:20px;"><svg class="a" style="left:2px;top:1px;" width="26" height="14" role="img" aria-label="D9/3"><text x="0" y="11.5" font-size="12">D9/3</text></svg></div>
<div class="sep" style="left:424px;top:273px;width:917px"></div>
<svg class="a" style="left:428px;top:285px;" width="56" height="14" role="img" aria-label="书刊条码:"><text x="0" y="11.5" font-size="12">书刊条码:</text></svg>
<div class="a" style="left:489px;top:281px;width:378px;height:20px;background:#fff;border-top:1px solid #d4d8dc;border-left:1px solid #d4d8dc;border-bottom:1px solid #9c9c9c"><svg class="a" style="left:2px;top:1px;" width="8" height="14" role="img" aria-label="2"><text x="0" y="11.5" font-size="12">2</text></svg></div>
<svg class="a" style="left:849px;top:282px" width="18" height="18" viewBox="0 0 18 18"><rect x=".5" y=".5" width="17" height="17" rx="3" fill="#fff" stroke="#c4c4c4"/><circle cx="8" cy="8" r="3.800" fill="none" stroke="#e03a1a" stroke-width="1.700"/><path d="M10.800 10.800l3.400 3.600" stroke="#e03a1a" stroke-width="2"/></svg>
<svg class="a" style="left:903px;top:285px;" width="56" height="14" role="img" aria-label="书刊编号:"><text x="0" y="11.5" font-size="12">书刊编号:</text></svg>
<div class="inp" style="left:961px;top:281px;width:380px;height:20px;"><svg class="a" style="left:2px;top:1px;" width="38" height="14" role="img" aria-label="100002"><text x="0" y="11.5" font-size="12" fill="#8a8a8a">100002</text></svg></div>
<svg class="a" style="left:428px;top:313px;" width="56" height="14" role="img" aria-label="书刊名称:"><text x="0" y="11.5" font-size="12">书刊名称:</text></svg>
<div class="inp" style="left:489px;top:310px;width:380px;height:20px;"><svg class="a" style="left:2px;top:1px;" width="62" height="14" role="img" aria-label="辩论对抗论"><text x="0" y="11.5" font-size="12">辩论对抗论</text></svg></div>
<svg class="a" style="left:903px;top:313px;" width="56" height="14" role="img" aria-label="主 题 词:"><text x="0" y="11.5" font-size="12" textLength="54" lengthAdjust="spacing">主 题 词:</text></svg>
<div class="inp" style="left:961px;top:310px;width:380px;height:20px;"><svg class="a" style="left:2px;top:1px;" width="140" height="14" role="img" aria-label="刑事诉讼 审理 研究 中国"><text x="0" y="11.5" font-size="12">刑事诉讼 审理 研究 中国</text></svg></div>
<svg class="a" style="left:428px;top:340px;" width="56" height="14" role="img" aria-label="作    者:"><text x="0" y="11.5" font-size="12" textLength="54" lengthAdjust="spacing">作    者:</text></svg>
<div class="inp" style="left:489px;top:337px;width:380px;height:20px;"><svg class="a" style="left:2px;top:1px;" width="38" height="14" role="img" aria-label="王顺义"><text x="0" y="11.5" font-size="12">王顺义</text></svg></div>
<svg class="a" style="left:903px;top:340px;" width="56" height="14" role="img" aria-label="I S B N :"><text x="0" y="11.5" font-size="12" textLength="54" lengthAdjust="spacing">I S B N :</text></svg>
<div class="inp" style="left:961px;top:337px;width:380px;height:20px;"><svg class="a" style="left:2px;top:1px;" width="62" height="14" role="img" aria-label="780185067X"><text x="0" y="11.5" font-size="12">780185067X</text></svg></div>
<svg class="a" style="left:428px;top:366px;" width="56" height="14" role="img" aria-label="出 版 社:"><text x="0" y="11.5" font-size="12" textLength="54" lengthAdjust="spacing">出 版 社:</text></svg>
<div class="inp" style="left:489px;top:363px;width:380px;height:20px;"><svg class="a" style="left:2px;top:1px;" width="86" height="14" role="img" aria-label="中国检察出版社"><text x="0" y="11.5" font-size="12">中国检察出版社</text></svg></div>
<svg class="a" style="left:876px;top:363px" width="19" height="18" viewBox="0 0 19 18"><defs><linearGradient id="ga876_363" x1="0" y1="0" x2="0" y2="1"><stop offset="0" stop-color="#9aee3a"/><stop offset=".5" stop-color="#38c018"/><stop offset="1" stop-color="#1e8a0c"/></linearGradient></defs><path d="M1 5.500h8V.800l8.600 8l-8.600 8V12H1z" fill="url(#ga876_363)" stroke="#2a6a10" stroke-width=".8"/><path d="M2 13.500h7v4l8.500 -8" fill="none" stroke="#555" stroke-opacity=".4" stroke-width="1"/></svg>
<svg class="a" style="left:903px;top:366px;" width="56" height="14" role="img" aria-label="丛 编 名:"><text x="0" y="11.5" font-size="12" textLength="54" lengthAdjust="spacing">丛 编 名:</text></svg>
<div class="inp" style="left:961px;top:363px;width:380px;height:20px;"></div>
<svg class="a" style="left:428px;top:393px;" width="56" height="14" role="img" aria-label="出版日期:"><text x="0" y="11.5" font-size="12">出版日期:</text></svg>
<div class="inp" style="left:488px;top:390px;width:160px;height:20px;"><svg class="a" style="left:2px;top:1px;" width="116" height="14" role="img" aria-label="1999-09-01 14:06:10"><text x="0" y="11.5" font-size="12">1999-09-01 14:06:10</text></svg></div>
<svg class="a" style="left:651px;top:393px;" width="56" height="14" role="img" aria-label="出版周期:"><text x="0" y="11.5" font-size="12">出版周期:</text></svg>
<div class="inp" style="left:706px;top:390px;width:160px;height:20px;"><div class="cb"><svg width="9" height="7" viewBox="0 0 9 7"><path d="M1 1.200l3.500 3.600l3.500 -3.600" fill="none" stroke="#333" stroke-width="2"/></svg></div></div>
<svg class="a" style="left:903px;top:393px;" width="56" height="14" role="img" aria-label="出版版次:"><text x="0" y="11.5" font-size="12">出版版次:</text></svg>
<div class="inp" style="left:961px;top:390px;width:380px;height:20px;"><svg class="a" style="left:2px;top:1px;" width="38" height="14" role="img" aria-label="第一版"><text x="0" y="11.5" font-size="12">第一版</text></svg><div class="cb"><svg width="9" height="7" viewBox="0 0 9 7"><path d="M1 1.200l3.500 3.600l3.500 -3.600" fill="none" stroke="#333" stroke-width="2"/></svg></div></div>
<div class="sep" style="left:424px;top:422px;width:917px"></div>
<svg class="a" style="left:428px;top:437px;" width="56" height="14" role="img" aria-label="书刊语言:"><text x="0" y="11.5" font-size="12">书刊语言:</text></svg>
<div class="inp" style="left:487px;top:434px;width:160px;height:20px;"><svg class="a" style="left:2px;top:1px;" width="26" height="14" role="img" aria-label="中文"><text x="0" y="11.5" font-size="12">中文</text></svg><div class="cb"><svg width="9" height="7" viewBox="0 0 9 7"><path d="M1 1.200l3.500 3.600l3.500 -3.600" fill="none" stroke="#333" stroke-width="2"/></svg></div></div>
<svg class="a" style="left:652px;top:437px;" width="56" height="14" role="img" aria-label="载体形态:"><text x="0" y="11.5" font-size="12">载体形态:</text></svg>
<div class="inp" style="left:707px;top:434px;width:160px;height:20px;"><svg class="a" style="left:2px;top:1px;" width="26" height="14" role="img" aria-label="16开"><text x="0" y="11.5" font-size="12">16开</text></svg><div class="cb"><svg width="9" height="7" viewBox="0 0 9 7"><path d="M1 1.200l3.500 3.600l3.500 -3.600" fill="none" stroke="#333" stroke-width="2"/></svg></div></div>
<svg class="a" style="left:903px;top:437px;" width="56" height="14" role="img" aria-label="国际ISSN:"><text x="0" y="11.5" font-size="12">国际ISSN:</text></svg>
<div class="inp" style="left:961px;top:434px;width:380px;height:20px;"></div>
<svg class="a" style="left:428px;top:464px;" width="56" height="14" role="img" aria-label="书刊附件:"><text x="0" y="11.5" font-size="12">书刊附件:</text></svg>
<div class="inp" style="left:487px;top:461px;width:160px;height:20px;"><svg class="a" style="left:2px;top:1px;" width="62" height="14" role="img" aria-label="附光盘一张"><text x="0" y="11.5" font-size="12">附光盘一张</text></svg><div class="cb"><svg width="9" height="7" viewBox="0 0 9 7"><path d="M1 1.200l3.500 3.600l3.500 -3.600" fill="none" stroke="#333" stroke-width="2"/></svg></div></div>
<svg class="a" style="left:652px;top:464px;" width="56" height="14" role="img" aria-label="登记日期:"><text x="0" y="11.5" font-size="12">登记日期:</text></svg>
<div class="inp" style="left:707px;top:461px;width:160px;height:20px;"><svg class="a" style="left:2px;top:1px;" width="58" height="14" role="img" aria-label="2008-09-01"><text x="0" y="11.5" font-size="12">2008-09-01</text></svg><div class="cb"><svg width="9" height="7" viewBox="0 0 9 7"><path d="M1 1.200l3.500 3.600l3.500 -3.600" fill="none" stroke="#333" stroke-width="2"/></svg></div></div>
<svg class="a" style="left:903px;top:464px;" width="56" height="14" role="img" aria-label="国内C N :"><text x="0" y="11.5" font-size="12" textLength="54" lengthAdjust="spacing">国内<tspan font-weight="bold">C N</tspan> :</text></svg>
<div class="inp" style="left:961px;top:461px;width:380px;height:20px;"></div>
<svg class="a" style="left:428px;top:491px;" width="56" height="14" role="img" aria-label="书刊页数:"><text x="0" y="11.5" font-size="12">书刊页数:</text></svg>
<div class="inp" style="left:487px;top:488px;width:160px;height:20px;"></div>
<svg class="a" style="left:652px;top:491px;" width="56" height="14" role="img" aria-label="书刊字数:"><text x="0" y="11.5" font-size="12">书刊字数:</text></svg>
<div class="inp" style="left:707px;top:488px;width:160px;height:20px;"></div>
<svg class="a" style="left:903px;top:491px;" width="56" height="14" role="img" aria-label="主办单位:"><text x="0" y="11.5" font-size="12">主办单位:</text></svg>
<div class="inp" style="left:961px;top:488px;width:380px;height:20px;"></div>
<svg class="a" style="left:428px;top:518px;" width="56" height="14" role="img" aria-label="单    价:"><text x="0" y="11.5" font-size="12" textLength="54" lengthAdjust="spacing">单    价:</text></svg>
<div class="inp" style="left:487px;top:515px;width:160px;height:20px;"><svg class="a" style="left:2px;top:1px;" width="14" height="14" role="img" aria-label="15"><text x="0" y="11.5" font-size="12">15</text></svg></div>
<svg class="a" style="left:652px;top:518px;" width="56" height="14" role="img" aria-label="总 册 数:"><text x="0" y="11.5" font-size="12" textLength="54" lengthAdjust="spacing">总 册 数:</text></svg>
<div class="inp" style="left:707px;top:515px;width:160px;height:20px;"><svg class="a" style="left:2px;top:1px;" width="8" height="14" role="img" aria-label="3"><text x="0" y="11.5" font-size="12">3</text></svg></div>
<svg class="a" style="left:903px;top:518px;" width="56" height="14" role="img" aria-label="书刊标签:"><text x="0" y="11.5" font-size="12">书刊标签:</text></svg>
<div class="inp" style="left:961px;top:515px;width:380px;height:20px;"></div>
<svg class="a" style="left:428px;top:546px;" width="56" height="14" role="img" aria-label="适读年龄:"><text x="0" y="11.5" font-size="12">适读年龄:</text></svg>
<div class="inp" style="left:487px;top:543px;width:55px;height:20px;"><svg class="a" style="left:2px;top:1px;" width="8" height="14" role="img" aria-label="0"><text x="0" y="11.5" font-size="12">0</text></svg></div>
<svg class="a" style="left:546px;top:546px;" width="26" height="14" role="img" aria-label="岁到"><text x="0" y="11.5" font-size="12">岁到</text></svg>
<div class="inp" style="left:575px;top:543px;width:55px;height:20px;"><svg class="a" style="left:2px;top:1px;" width="8" height="14" role="img" aria-label="0"><text x="0" y="11.5" font-size="12">0</text></svg></div>
<svg class="a" style="left:633px;top:546px;" width="14" height="14" role="img" aria-label="岁"><text x="0" y="11.5" font-size="12">岁</text></svg>
<svg class="a" style="left:646px;top:546px;" width="62" height="14" role="img" aria-label="CIP核准号:"><text x="0" y="11.5" font-size="12">CIP核准号:</text></svg>
<div class="inp" style="left:707px;top:543px;width:161px;height:20px;"></div>
<svg class="a" style="left:903px;top:546px;" width="56" height="14" role="img" aria-label="备    注:"><text x="0" y="11.5" font-size="12" textLength="54" lengthAdjust="spacing">备    注:</text></svg>
<div class="inp" style="left:961px;top:543px;width:380px;height:20px;"></div>
<svg class="a" style="left:428px;top:574px;" width="56" height="14" role="img" aria-label="内容简介:"><text x="0" y="11.5" font-size="12">内容简介:</text></svg>
<div class="inp" style="left:488px;top:575px;width:852px;height:48px;"></div>
<div class="a" style="left:1321px;top:577px;width:17px;height:44px;background:#f0f0f0"></div>
<svg class="a" style="left:1325px;top:580px" width="9" height="36" viewBox="0 0 9 36"><path d="M1 5l3.500 -3.500l3.500 3.500z" fill="#444"/><path d="M1 30l3.500 3.500l3.500 -3.500z" fill="#444"/></svg>
<div class="chk" style="left:429px;top:629px"><svg class="a" style="left:1px;top:1px" width="9" height="9" viewBox="0 0 9 9"><path d="M1 4l2.500 3l4.500 -6" fill="none" stroke="#21a121" stroke-width="2"/></svg></div>
<svg class="a" style="left:444px;top:628px;" width="98" height="14" role="img" aria-label="启用图书预借功能"><text x="0" y="11.5" font-size="12">启用图书预借功能</text></svg>
<div class="chk" style="left:577px;top:628px"></div>
<svg class="a" style="left:592px;top:628px;" width="110" height="14" role="img" aria-label="设置图书为停用状态"><text x="0" y="11.5" font-size="12">设置图书为停用状态</text></svg>
<div class="chk" style="left:708px;top:628px"></div>
<svg class="a" style="left:722px;top:628px;" width="146" height="14" role="img" aria-label="图书名称重复时，允许保存"><text x="0" y="11.5" font-size="12">图书名称重复时，允许保存</text></svg>
<div class="sep" style="left:424px;top:650px;width:917px"></div>
<svg class="a" style="left:428px;top:656px;" width="56" height="14" role="img" aria-label="借出次数:"><text x="0" y="11.5" font-size="12">借出次数:</text></svg>
<svg class="a" style="left:487px;top:656px;" width="8" height="14" role="img" aria-label="2"><text x="0" y="11.5" font-size="12" font-weight="bold" fill="#666">2</text></svg>
<svg class="a" style="left:587px;top:656px;" width="56" height="14" role="img" aria-label="借出册数:"><text x="0" y="11.5" font-size="12">借出册数:</text></svg>
<svg class="a" style="left:646px;top:656px;" width="8" height="14" role="img" aria-label="2"><text x="0" y="11.5" font-size="12" font-weight="bold" fill="#666">2</text></svg>
<div class="chk" style="left:429px;top:691px"></div>
<svg class="a" style="left:444px;top:691px;" width="50" height="14" role="img" aria-label="补充库存"><text x="0" y="11.5" font-size="12">补充库存</text></svg>
<div class="inp" style="left:499px;top:689px;width:64px;height:20px;"><svg class="a" style="left:2px;top:1px;" width="8" height="14" role="img" aria-label="0"><text x="0" y="11.5" font-size="12" fill="#8a8a8a">0</text></svg></div>
<svg class="a" style="left:568px;top:691px;" width="14" height="14" role="img" aria-label="本"><text x="0" y="11.5" font-size="12">本</text></svg>
<div class="chk" style="left:429px;top:714px"><svg class="a" style="left:1px;top:1px" width="9" height="9" viewBox="0 0 9 9"><path d="M1 4l2.500 3l4.500 -6" fill="none" stroke="#21a121" stroke-width="2"/></svg></div>
<svg class="a" style="left:444px;top:714px;" width="170" height="14" role="img" aria-label="从美萍图书服务器获取图书信息"><text x="0" y="11.5" font-size="12">从美萍图书服务器获取图书信息</text></svg>
<svg class="a" style="left:629px;top:709px" width="440" height="26" viewBox="0 0 440 26" role="img" aria-label="美萍图书馆查询云服务，正版用户24小时开放，无年费"><g class="br3"><text x="0.5" y="18" textLength="431" lengthAdjust="spacing" transform="translate(2,8)" fill="#fff" stroke="#fff" stroke-width=".4">美萍图书馆查询云服务，正版用户24小时开放，无年费</text><text x="0.5" y="18" textLength="431" lengthAdjust="spacing" fill="#000">美萍图书馆查询云服务，正版用户24小时开放，无年费</text></g></svg>
<div class="btn" style="left:1078px"><svg class="a" style="left:26px;top:5px;" width="56" height="14" role="img" aria-label="保存 [F5]"><text x="0" y="11.5" font-size="12">保存 [F5]</text></svg></div>
<div class="btn" style="left:1231px"><svg class="a" style="left:26px;top:5px;" width="56" height="14" role="img" aria-label="取消 [F4]"><text x="0" y="11.5" font-size="12">取消 [F4]</text></svg></div>
</body></html>
